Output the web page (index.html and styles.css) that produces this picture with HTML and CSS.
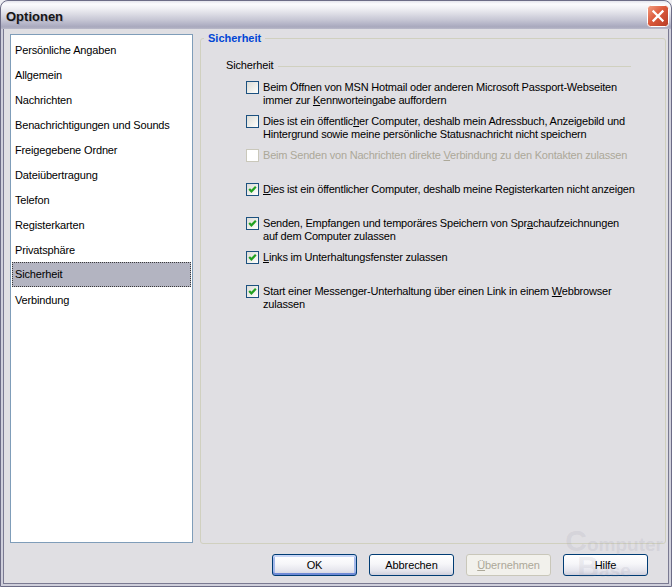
FILE: index.html
```html
<!DOCTYPE html>
<html lang="de">
<head>
<meta charset="utf-8">
<title>Optionen</title>
<link rel="stylesheet" href="styles.css">
</head>
<body>
<div class="window">
  <div class="titlebar">
    <span class="title">Optionen</span>
    <span class="close">
      <svg width="22" height="22" viewBox="0 0 22 22">
        <defs>
          <linearGradient id="cg" x1="0" y1="0" x2="1" y2="1">
            <stop offset="0" stop-color="#f3a184"/>
            <stop offset="0.45" stop-color="#dc5a3c"/>
            <stop offset="1" stop-color="#b63b25"/>
          </linearGradient>
        </defs>
        <rect x="0.5" y="0.5" width="21" height="21" rx="3" fill="url(#cg)" stroke="#ffffff"/>
        <path d="M6.5 6.5 L15.5 15.5 M15.5 6.5 L6.5 15.5" stroke="#ffffff" stroke-width="2.3" stroke-linecap="square"/>
      </svg>
    </span>
  </div>
  <div class="client">
    <div class="main">
      <ul class="list">
        <li>Persönliche Angaben</li>
        <li>Allgemein</li>
        <li>Nachrichten</li>
        <li>Benachrichtigungen und Sounds</li>
        <li>Freigegebene Ordner</li>
        <li>Dateiübertragung</li>
        <li>Telefon</li>
        <li>Registerkarten</li>
        <li>Privatsphäre</li>
        <li class="selected">Sicherheit</li>
        <li>Verbindung</li>
      </ul>
      <fieldset class="group">
        <legend>Sicherheit</legend>
        <div class="group-body">
          <div class="section-head">Sicherheit</div>
          <div class="options">
            <div class="opt">
              <span class="box"></span>
              <span class="txt">Beim Öffnen von MSN Hotmail oder anderen Microsoft Passport-Webseiten<br>immer zur <u>K</u>ennworteingabe auffordern</span>
            </div>
            <div class="opt">
              <span class="box"></span>
              <span class="txt">Dies ist ein öffentlic<u>h</u>er Computer, deshalb mein Adressbuch, Anzeigebild und<br>Hintergrund sowie meine persönliche Statusnachricht nicht speichern</span>
            </div>
            <div class="opt disabled">
              <span class="box"></span>
              <span class="txt">Beim Senden von Nachrichten direkte <u>V</u>erbindung zu den Kontakten zulassen</span>
            </div>
            <div class="opt">
              <span class="box checked"><svg width="11" height="11" viewBox="0 0 11 11"><path d="M2.2 5 L4.4 7.3 L8.8 2.8" fill="none" stroke="#21a121" stroke-width="2.2"/></svg></span>
              <span class="txt"><u>D</u>ies ist ein öffentlicher Computer, deshalb meine Registerkarten nicht anzeigen</span>
            </div>
            <div class="opt">
              <span class="box checked"><svg width="11" height="11" viewBox="0 0 11 11"><path d="M2.2 5 L4.4 7.3 L8.8 2.8" fill="none" stroke="#21a121" stroke-width="2.2"/></svg></span>
              <span class="txt">Senden, Empfangen und temporäres Speichern von Spr<u>a</u>chaufzeichnungen<br>auf dem Computer zulassen</span>
            </div>
            <div class="opt">
              <span class="box checked"><svg width="11" height="11" viewBox="0 0 11 11"><path d="M2.2 5 L4.4 7.3 L8.8 2.8" fill="none" stroke="#21a121" stroke-width="2.2"/></svg></span>
              <span class="txt"><u>L</u>inks im Unterhaltungsfenster zulassen</span>
            </div>
            <div class="opt">
              <span class="box checked"><svg width="11" height="11" viewBox="0 0 11 11"><path d="M2.2 5 L4.4 7.3 L8.8 2.8" fill="none" stroke="#21a121" stroke-width="2.2"/></svg></span>
              <span class="txt">Start einer Messenger-Unterhaltung über einen Link in einem <u>W</u>ebbrowser<br>zulassen</span>
            </div>
          </div>
        </div>
      </fieldset>
    </div>
    <div class="buttons">
      <span class="btn default">OK</span>
      <span class="btn">Abbrechen</span>
      <span class="btn disabled"><u>Ü</u>bernehmen</span>
      <span class="btn">Hilfe</span>
    </div>
  </div>
  <div class="watermark"><span class="wm-line one"><span class="wm-big">C</span>omputer</span><span class="wm-line two"><span class="wm-big">B</span>ase</span></div>
</div>
</body>
</html>
```
FILE: styles.css
```css
* { box-sizing: border-box; }

html, body {
  margin: 0;
  padding: 0;
}

body {
  width: 672px;
  height: 587px;
  overflow: hidden;
  background: #eeeef2;
  font-family: "Liberation Sans", Arial, sans-serif;
  font-size: 11px;
  color: #000;
}

.window {
  position: relative;
  width: 672px;
  height: 587px;
  border: 1px solid #6c6c86;
  border-radius: 8px 8px 0 0;
  background: #cfcfdb;
  display: flex;
  flex-direction: column;
  overflow: hidden;
}

.titlebar {
  flex: none;
  height: 28px;
  display: flex;
  align-items: center;
  justify-content: space-between;
  padding: 0 2px 0 5px;
  border-radius: 7px 7px 0 0;
  background: linear-gradient(180deg,
    #e4e4ec 0px, #fbfbfd 3px, #f1f1f5 7px, #dcdce5 13px,
    #c6c6d4 19px, #b0b0c4 24px, #a9a9bd 26px, #babaca 28px);
}

.title {
  font-weight: bold;
  font-size: 13px;
  color: #151515;
  text-shadow: 1px 1px 0 rgba(120, 120, 140, 0.35);
  padding-top: 2px;
}

.close {
  display: flex;
  width: 22px;
  height: 22px;
  margin-top: 2px;
}

.client {
  flex: 1;
  margin: 0 2px 2px;
  border: 1px solid #7a7a92;
  border-top: none;
  background: #e0dfe3;
  padding: 5px 2px 0 6px;
  display: flex;
  flex-direction: column;
}

.main {
  display: grid;
  grid-template-columns: 183px 466px;
  column-gap: 7px;
  height: 510px;
  align-items: start;
}

.list {
  margin: 0;
  padding: 3px 1px 2px;
  list-style: none;
  height: 509px;
  background: #fff;
  border: 1px solid #7f9db9;
  letter-spacing: -0.15px;
}

.list li {
  height: 25px;
  line-height: 25px;
  padding-left: 3px;
  white-space: nowrap;
}

.list li.selected {
  background: #b3b4c1;
  border: 1px dotted #3a3a3a;
  line-height: 23px;
  padding-left: 2px;
  margin-top: -1px;
  margin-bottom: 1px;
}

.group {
  margin: -2px 0 0;
  padding: 0;
  height: 512px;
  min-width: 0;
  border: 1px solid #d0d0bf;
  border-radius: 3px;
}

.group legend {
  margin-left: 3px;
  padding: 0 4px;
  line-height: 13px;
  font-weight: bold;
  color: #0046d5;
}

.group-body {
  padding: 14px 34px 0 25px;
}

.section-head {
  display: flex;
  align-items: center;
  gap: 5px;
  line-height: 13px;
  letter-spacing: -0.15px;
}

.section-head::after {
  content: "";
  flex: 1;
  border-top: 1px solid #d0d0bf;
  margin-top: 1px;
}

.options {
  margin-top: 9px;
  padding-left: 20px;
}

.opt {
  display: flex;
  align-items: flex-start;
  gap: 4px;
  height: 34px;
  line-height: 13px;
  letter-spacing: -0.2px;
  white-space: nowrap;
}

.box {
  flex: none;
  width: 13px;
  height: 13px;
  border: 1px solid #1c5180;
  background: linear-gradient(135deg, #dcdcd7 0%, #f4f4f0 70%, #ffffff 100%);
  display: flex;
}

.opt.disabled .box {
  border-color: #cac8bb;
  background: #fff;
}

.opt.disabled .txt {
  color: #aca899;
}

.buttons {
  display: flex;
  justify-content: flex-end;
  gap: 12px;
  padding-right: 18px;
  margin-top: 10px;
}

.btn {
  width: 85px;
  height: 22px;
  display: flex;
  align-items: center;
  justify-content: center;
  border: 1px solid #003c74;
  border-radius: 3px;
  background: linear-gradient(180deg, #ffffff 0%, #f6f6f9 45%, #e4e4ec 80%, #cfcfdc 100%);
  letter-spacing: -0.1px;
}

.btn.default {
  box-shadow: inset 0 2px 0 #c8d6f6, inset 0 -2px 0 #6f8ad6, inset 2px 0 0 #a4b8ea, inset -2px 0 0 #a4b8ea;
}

.btn.disabled {
  border-color: #c9c7ba;
  background: #f2f1ec;
  color: #aca899;
}

.watermark {
  position: absolute;
  right: 8px;
  bottom: 4px;
  display: flex;
  flex-direction: column;
  pointer-events: none;
  color: rgba(140, 140, 160, 0.15);
  font-weight: bold;
  font-size: 19px;
  line-height: 22px;
}

.wm-line.two {
  padding-left: 12px;
}

.wm-big {
  font-size: 30px;
}
```
